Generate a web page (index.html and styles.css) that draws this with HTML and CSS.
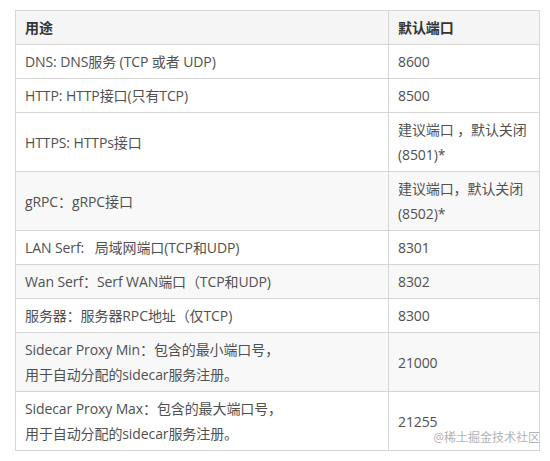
FILE: index.html
```html
<!DOCTYPE html>
<html lang="zh">
<head>
<meta charset="utf-8">
<link rel="stylesheet" href="styles.css">
</head>
<body>
<div class="page">
  <table class="ports">
    <colgroup><col class="c1"><col class="c2"></colgroup>
    <thead>
      <tr><th>用途</th><th>默认端口</th></tr>
    </thead>
    <tbody>
      <tr><td>DNS: DNS服务 (TCP 或者 UDP)</td><td>8600</td></tr>
      <tr><td>HTTP: HTTP接口(只有TCP)</td><td>8500</td></tr>
      <tr><td>HTTPS: HTTPs接口</td><td>建议端口 ，默认关闭(8501)*</td></tr>
      <tr class="alt"><td>gRPC：gRPC接口</td><td>建议端口，默认关闭(8502)*</td></tr>
      <tr><td>LAN Serf:&nbsp;&nbsp;&nbsp;局域网端口(TCP和UDP)</td><td>8301</td></tr>
      <tr class="alt"><td>Wan Serf：Serf WAN端口（TCP和UDP)</td><td>8302</td></tr>
      <tr><td>服务器：服务器RPC地址（仅TCP)</td><td>8300</td></tr>
      <tr class="alt"><td>Sidecar Proxy Min：包含的最小端口号，<br>用于自动分配的sidecar服务注册。</td><td>21000</td></tr>
      <tr><td>Sidecar Proxy Max：包含的最大端口号，<br>用于自动分配的sidecar服务注册。</td><td>21255</td></tr>
    </tbody>
  </table>
  <div class="watermark">@稀土掘金技术社区</div>
</div>
</body>
</html>
```
FILE: styles.css
```css
html, body {
  margin: 0;
  padding: 0;
  background: #ffffff;
}
.page {
  position: relative;
  padding: 10px 0 0 15px;
  width: 523px;
  font-family: "Open Sans", "Noto Sans CJK SC", sans-serif;
  font-size: 14px;
  color: #505050;
}
.ports {
  border-collapse: collapse;
  width: 524px;
  table-layout: fixed;
}
.c1 { width: 373px; }
.c2 { width: 151px; }
.ports th,
.ports td {
  border: 1px solid #d6d6d6;
  padding: 4px 9px;
  line-height: 25px;
  text-align: left;
  vertical-align: middle;
  letter-spacing: -0.1px;
}
.ports th {
  background: #f5f5f5;
  font-weight: bold;
  color: #333;
}
.ports tr.alt td {
  background: #f8f8f8;
}
.watermark {
  position: absolute;
  right: -2px;
  top: 430px;
  font-size: 12px;
  line-height: 16px;
  color: #b3b3b3;
  text-shadow: 0 0 2px #fff;
}
```
